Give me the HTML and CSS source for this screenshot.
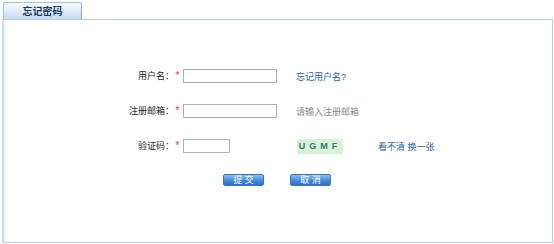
FILE: index.html
```html
<!DOCTYPE html>
<html>
<head>
    <title>忘记密码</title>
    <link rel="stylesheet" href="styles.css">
</head>
<body>
    <div class="tabs">
        <div class="tab">忘记密码</div>
    </div>
    <div class="panel">
        <form class="form">
            <div class="row">
                <label class="label">用户名：</label>
                <span class="star">*</span>
                <div class="field"><input type="text" class="input"></div>
                <a class="link" href="#">忘记用户名?</a>
            </div>
            <div class="row">
                <label class="label">注册邮箱：</label>
                <span class="star">*</span>
                <div class="field"><input type="text" class="input"></div>
                <span class="hint">请输入注册邮箱</span>
            </div>
            <div class="row">
                <label class="label">验证码：</label>
                <span class="star">*</span>
                <div class="field"><input type="text" class="input input-short"></div>
                <span class="captcha">UGMF</span>
                <a class="link link-refresh" href="#">看不清 换一张</a>
            </div>
            <div class="actions">
                <button type="submit" class="btn">提 交</button>
                <button type="button" class="btn">取 消</button>
            </div>
        </form>
    </div>
</body>
</html>
```

FILE: styles.css
```css
body { margin: 0; padding-top: 2px; font-family: "Liberation Sans", "Noto Sans CJK SC", sans-serif; font-size: 9px; color: #222; background: #fff; }
.tabs { display: flex; padding-left: 3px; height: 17px; }
.tab { width: 77px; height: 16px; border: 1px solid #a8bfd9; border-right-color: #8ea9c8; border-bottom: none; border-radius: 3px 3px 0 0; background: linear-gradient(#fbfdff, #c6dbf1); color: #16386e; font-weight: bold; font-size: 10px; line-height: 17px; text-align: center; }
.panel { margin: 0 1px 0 2px; height: 222px; border: 1px solid #b7cbe0; border-left: 2px solid #cadcef; box-shadow: inset 4px 0 4px -2px #eaf3fb; }
.form { padding-top: 49px; }
.row { display: flex; align-items: center; height: 14px; margin-bottom: 21px; }
.label { width: 170px; text-align: right; line-height: 14px; }
.star { width: 7px; margin-right: 2px; color: #e8323c; text-align: center; font-size: 10px; line-height: 14px; }
.field { width: 113px; }
.input { display: block; width: 94px; height: 14px; margin: 0; padding: 0; border: 1px solid #a9b0b8; box-sizing: border-box; }
.input-short { width: 47px; }
.link { color: #2a62a8; text-decoration: none; }
.hint { color: #8a8a8a; }
.captcha { width: 46px; height: 15px; margin-left: 1px; background: #d7f2d7; color: #2f7d62; font-weight: bold; font-size: 9px; letter-spacing: 4px; line-height: 15px; text-align: center; }
.link-refresh { margin-left: 35px; }
.actions { display: flex; gap: 26px; padding-left: 219px; }
.btn { width: 41px; height: 12px; padding: 0; border: 1px solid #3b76c2; border-radius: 2px; background: linear-gradient(#86bdf3, #3f86dc 60%, #2c6fcb); color: #fff; font-family: inherit; font-size: 9px; line-height: 10px; cursor: pointer; }
```
